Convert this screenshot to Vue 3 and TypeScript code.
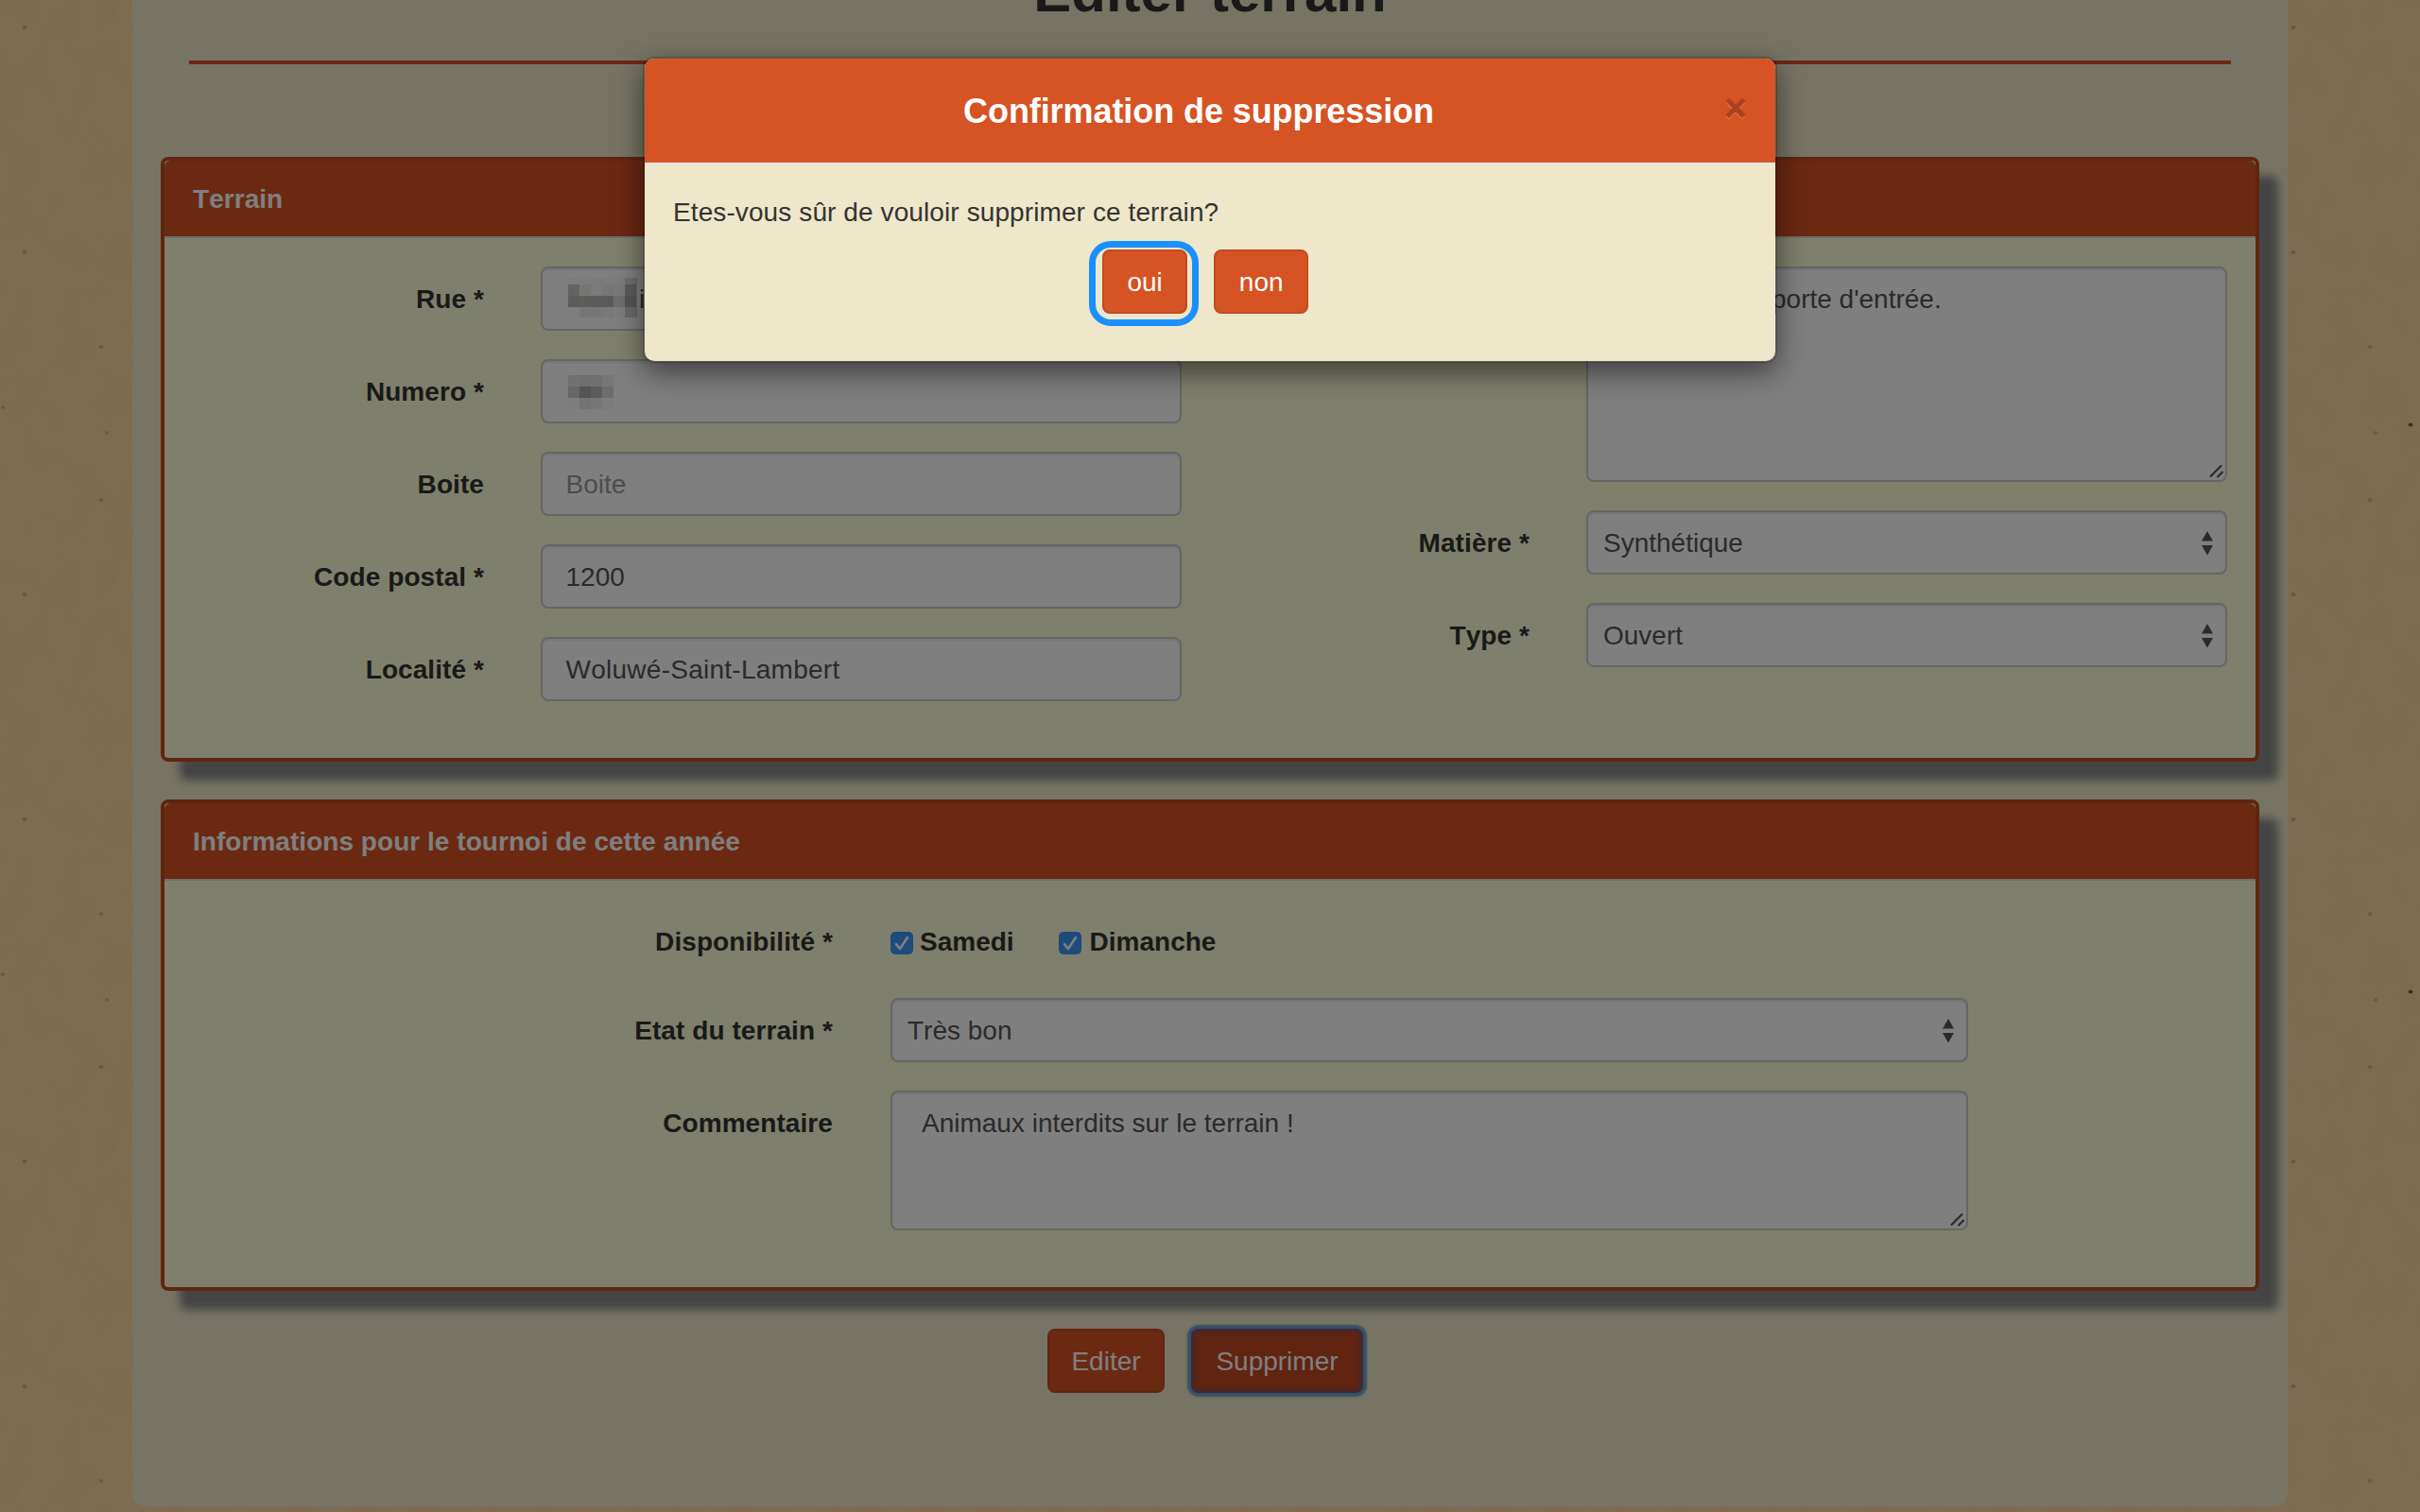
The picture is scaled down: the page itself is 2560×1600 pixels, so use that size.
<script setup lang="ts">
interface Field {
  label: string
  value?: string
  placeholder?: string
  tail?: string
  mosaic?: string[][]
}

// Obfuscated values, drawn as rows of 12px cells
const streetMosaic: string[][] = [
  ['#f9f9fb', '#fbfbfd', '#f6f6fb', '#f8f8fb', '#fafafa', '#dedee4'],
  ['#c6c6c0', '#ecece9', '#f7f7f8', '#eeeef0', '#f5f5f5', '#b8b8c0'],
  ['#b6b6b4', '#babab9', '#b6b6b5', '#b4b4b4', '#dededc', '#acacb2'],
  ['#fdfdfb', '#ededec', '#ededed', '#f2f2f2', '#fbfbfb', '#d4d4da'],
]
const numberMosaic: string[][] = [
  ['#e2e2e2', '#dcdcdc', '#dedede', '#eeeeec', '#ffffff'],
  ['#cecece', '#a8a8a8', '#b8b8b8', '#dadada', '#ffffff'],
  ['#fafafa', '#e8e8e8', '#efefec', '#f8f8f8', '#ffffff'],
]

const address: Field[] = [
  { label: 'Rue *', mosaic: streetMosaic, tail: 'i' },
  { label: 'Numero *', mosaic: numberMosaic },
  { label: 'Boite', placeholder: 'Boite' },
  { label: 'Code postal *', value: '1200' },
  { label: 'Localité *', value: 'Woluwé-Saint-Lambert' },
]

const surface: Field[] = [
  { label: 'Matière *', value: 'Synthétique' },
  { label: 'Type *', value: 'Ouvert' },
]

const days: string[] = ['Samedi', 'Dimanche']

const specks: { x: number; y: number; o: number }[] = [
  { x: 26, y: 29, o: 0.24 },
  { x: 26, y: 267, o: 0.24 },
  { x: 107, y: 367, o: 0.2 },
  { x: 3, y: 431, o: 0.2 },
  { x: 113, y: 458, o: 0.18 },
  { x: 107, y: 529, o: 0.2 },
  { x: 150, y: 449.5, o: 0.7 },
]
</script>

<template>
  <div class="page">
    <svg class="paper" width="2560" height="1600" aria-hidden="true">
      <defs>
        <filter id="blotch" x="0" y="0" width="100%" height="100%" color-interpolation-filters="sRGB">
          <feTurbulence type="fractalNoise" baseFrequency="0.03 0.02" numOctaves="4" seed="7" stitchTiles="stitch" />
          <feColorMatrix values="0.06 0 0 0 0.965  -0.05 0 0 0 0.863  -0.09 0 0 0 0.668  0 0 0 0 1" />
        </filter>
        <pattern id="tile" width="600" height="600" patternUnits="userSpaceOnUse">
          <rect width="600" height="600" fill="#fed69e" filter="url(#blotch)" />
          <ellipse v-for="(s, i) in specks" :key="i" :cx="s.x" :cy="s.y" rx="2.4" ry="1.9" fill="#4a2a08" :opacity="s.o" />
        </pattern>
      </defs>
      <rect width="2560" height="1600" fill="url(#tile)" />
    </svg>

    <main class="container">
      <h1>Editer terrain</h1>
      <hr />

      <section class="panel">
        <h3 class="panel-heading">Terrain</h3>
        <div class="panel-body two">
          <div class="col">
            <div v-for="f in address" :key="f.label" class="row">
              <label>{{ f.label }}</label>
              <div class="control">
                <div v-if="f.mosaic" class="mosaic">
                  <div v-for="(line, r) in f.mosaic" :key="r" class="mosaic-row">
                    <i v-for="(c, k) in line" :key="k" :style="{ background: c }"></i>
                  </div>
                </div>
                <span v-if="f.tail" class="tail">{{ f.tail }}</span>
                <span v-if="f.value">{{ f.value }}</span>
                <span v-if="f.placeholder" class="placeholder">{{ f.placeholder }}</span>
              </div>
            </div>
          </div>
          <div class="col">
            <div class="row">
              <label></label>
              <div class="control area tall">
                <span>porte d'entrée.</span>
                <svg class="grip" width="16" height="16" viewBox="0 0 16 16"><path d="M1 13.5 13 1.5M8.5 14 14.5 8" /></svg>
              </div>
            </div>
            <div v-for="f in surface" :key="f.label" class="row">
              <label>{{ f.label }}</label>
              <div class="control select">
                <span>{{ f.value }}</span>
                <svg class="arrows" width="14" height="26" viewBox="0 0 14 26"><path d="M7 0 13 10.5H1zM1 15h12L7 25.5z" /></svg>
              </div>
            </div>
          </div>
        </div>
      </section>

      <section class="panel">
        <h3 class="panel-heading">Informations pour le tournoi de cette année</h3>
        <div class="panel-body wide">
          <div class="row checks">
            <label>Disponibilité *</label>
            <div class="days">
              <span v-for="d in days" :key="d" class="day">
                <svg width="24" height="24" viewBox="0 0 24 24">
                  <rect width="24" height="24" rx="5" fill="#3a97f8" />
                  <path d="M6 13.2 10 18 18 6" fill="none" stroke="#fff" stroke-width="2.6" stroke-linecap="round" stroke-linejoin="round" />
                </svg>
                <b>{{ d }}</b>
              </span>
            </div>
          </div>
          <div class="row">
            <label>Etat du terrain *</label>
            <div class="control select">
              <span>Très bon</span>
              <svg class="arrows" width="14" height="26" viewBox="0 0 14 26"><path d="M7 0 13 10.5H1zM1 15h12L7 25.5z" /></svg>
            </div>
          </div>
          <div class="row">
            <label>Commentaire</label>
            <div class="control area">
              <span>Animaux interdits sur le terrain !</span>
              <svg class="grip" width="16" height="16" viewBox="0 0 16 16"><path d="M1 13.5 13 1.5M8.5 14 14.5 8" /></svg>
            </div>
          </div>
        </div>
      </section>

      <div class="actions">
        <button class="btn edit">Editer</button>
        <button class="btn pressed">Supprimer</button>
      </div>
    </main>

    <div class="backdrop">
      <div class="modal" role="dialog">
        <header class="modal-header">
          <h4>Confirmation de suppression</h4>
          <button class="close">×</button>
        </header>
        <div class="modal-body">
          <p>Etes-vous sûr de vouloir supprimer ce terrain?</p>
          <div class="choices">
            <button class="btn ringed">oui</button>
            <button class="btn">non</button>
          </div>
        </div>
      </div>
    </div>
  </div>
</template>

<style>
body {
  margin: 0;
  overflow: hidden;
}
</style>

<style scoped>
* {
  box-sizing: border-box;
}
.page {
  position: relative;
  width: 2560px;
  height: 1600px;
  overflow: hidden;
  background: #fed69e;
  color: #333;
  font: 28px/40px "Liberation Sans", Arial, sans-serif;
  font-kerning: none;
}
.paper {
  position: absolute;
  inset: 0;
}
.container {
  position: relative;
  width: 2280px;
  height: 1594px;
  margin: 0 auto;
  padding: 0 30px;
  border-radius: 0 0 14px 14px;
  background: #eee8ca;
  display: flow-root;
}
h1 {
  margin: -41px 0 39px;
  font-size: 60px;
  line-height: 66px;
  text-align: center;
}
hr {
  height: 4px;
  margin: 0 30px 98px;
  border: 0;
  background: #d65324;
}
.panel {
  margin-bottom: 40px;
  border: 4px solid #c14a20;
  border-radius: 8px;
  background: #ffffda;
  box-shadow: 20px 20px 10px #888;
}
.panel-heading {
  margin: 0;
  height: 82px;
  padding: 21px 30px 0;
  border-bottom: 2px solid #ddd;
  border-radius: 6px 6px 0 0;
  background: #d65324;
  color: #fff;
  font-size: 28px;
  line-height: 40px;
  letter-spacing: 0.04px;
}
.panel-body {
  padding: 30px;
}
.two {
  display: flex;
  justify-content: space-between;
}
.col {
  width: 1046px;
}
.row {
  display: flex;
  justify-content: flex-end;
  align-items: flex-start;
  gap: 60px;
  margin-bottom: 30px;
}
.row label {
  padding-top: 15px;
  font-weight: 700;
  letter-spacing: 0.08px;
  white-space: nowrap;
}
.wide label {
  margin-right: 1px;
}
.control {
  position: relative;
  flex: none;
  width: 678px;
  height: 68px;
  padding: 13px 24.5px 0;
  border: 2px solid #ccc;
  border-radius: 8px;
  background: #fff;
  box-shadow: inset 0 2px 2px rgba(0, 0, 0, 0.075);
  color: #555;
  white-space: nowrap;
}
.col:first-child .row:last-child .control {
  letter-spacing: 0.26px;
}
.wide .row {
  margin-right: 274px;
}
.wide .control,
.days {
  width: 1140px;
}
.placeholder {
  color: #999;
}
.control.select {
  padding-left: 16px;
}
.arrows {
  position: absolute;
  right: 12px;
  top: 20px;
  fill: #555;
}
.control.area {
  height: 148px;
  padding-left: 31px;
}
.control.tall {
  height: 228px;
  padding-left: 194px;
}
.grip {
  position: absolute;
  right: 1px;
  bottom: 1px;
  fill: none;
  stroke: #555;
  stroke-width: 2.2;
}
.mosaic {
  position: absolute;
  left: 27px;
  top: 10px;
}
.row:nth-child(2) .mosaic {
  top: 15px;
}
.mosaic-row {
  display: flex;
}
.mosaic-row i {
  width: 12px;
  height: 12px;
}
.row:first-child .mosaic-row:first-child i {
  height: 7px;
}
.row:first-child .mosaic-row:last-child i {
  height: 11px;
}
.row:first-child .mosaic-row i:last-child {
  width: 13px;
  border-right: 1px solid #d8d4cc;
}
.tail {
  position: absolute;
  left: 102px;
}
.checks {
  height: 64px;
}
.days {
  display: flex;
  gap: 47px;
  padding-top: 15px;
}
.day {
  display: flex;
  gap: 7px;
}
.day + .day {
  gap: 9px;
}
.day svg {
  margin-top: 9px;
}
.actions {
  display: flex;
  justify-content: center;
  gap: 28px;
  padding-right: 10px;
}
.btn {
  height: 68px;
  padding: 2px 24px 0;
  border: 2px solid #c14a20;
  border-radius: 8px;
  background: #d65324;
  color: #fff;
  font: inherit;
  font-kerning: none;
}
.btn.edit {
  width: 124px;
  padding: 2px 0 0;
}
.pressed {
  width: 182px;
  border: 0;
  padding: 2px 0 0;
  background: #c14820;
  box-shadow: 0 0 2px 4px rgba(45, 125, 205, 0.68), inset 0 0 5px 2px rgba(40, 100, 200, 0.7);
}
.backdrop {
  position: absolute;
  inset: 0;
  padding-top: 60px;
  background: rgba(0, 0, 0, 0.5);
}
.modal {
  width: 1200px;
  height: 324px;
  margin: 0 auto;
  border: 2px solid rgba(0, 0, 0, 0.2);
  border-radius: 12px;
  background: #eee7ca;
  background-clip: padding-box;
  box-shadow: 0 10px 30px rgba(0, 0, 0, 0.5);
}
.modal-header {
  display: flex;
  height: 112px;
  padding: 30px;
  border-bottom: 2px solid #e5e5e5;
  border-radius: 10px 10px 0 0;
  background: #d65324;
}
.modal-header h4 {
  flex: 1;
  margin: 1px 1px 0 0;
  color: #fff;
  font-size: 36px;
  line-height: 50px;
  letter-spacing: -0.08px;
  text-align: center;
}
.close {
  width: 24px;
  height: 42px;
  margin: 1px 0 0 -1px;
  padding: 0;
  border: 0;
  background: none;
  color: #000;
  font: 700 40px/42px "Liberation Sans", Arial, sans-serif;
  -webkit-text-stroke: 0.8px #000;
  text-shadow: 0 2px 0 #fff;
  opacity: 0.2;
}
.modal-body {
  padding: 31px 30px 0;
}
.modal-body p {
  margin: 0;
  letter-spacing: 0.1px;
}
.choices {
  display: flex;
  justify-content: center;
  gap: 28px;
  padding: 19px 10px 0 0;
}
.choices .btn {
  padding: 2px 24.5px 0;
}
.ringed {
  position: relative;
}
.ringed::after {
  content: "";
  position: absolute;
  inset: -11px -14px -15px -16px;
  border: 7px solid #1a90ff;
  border-radius: 23px;
}
</style>
